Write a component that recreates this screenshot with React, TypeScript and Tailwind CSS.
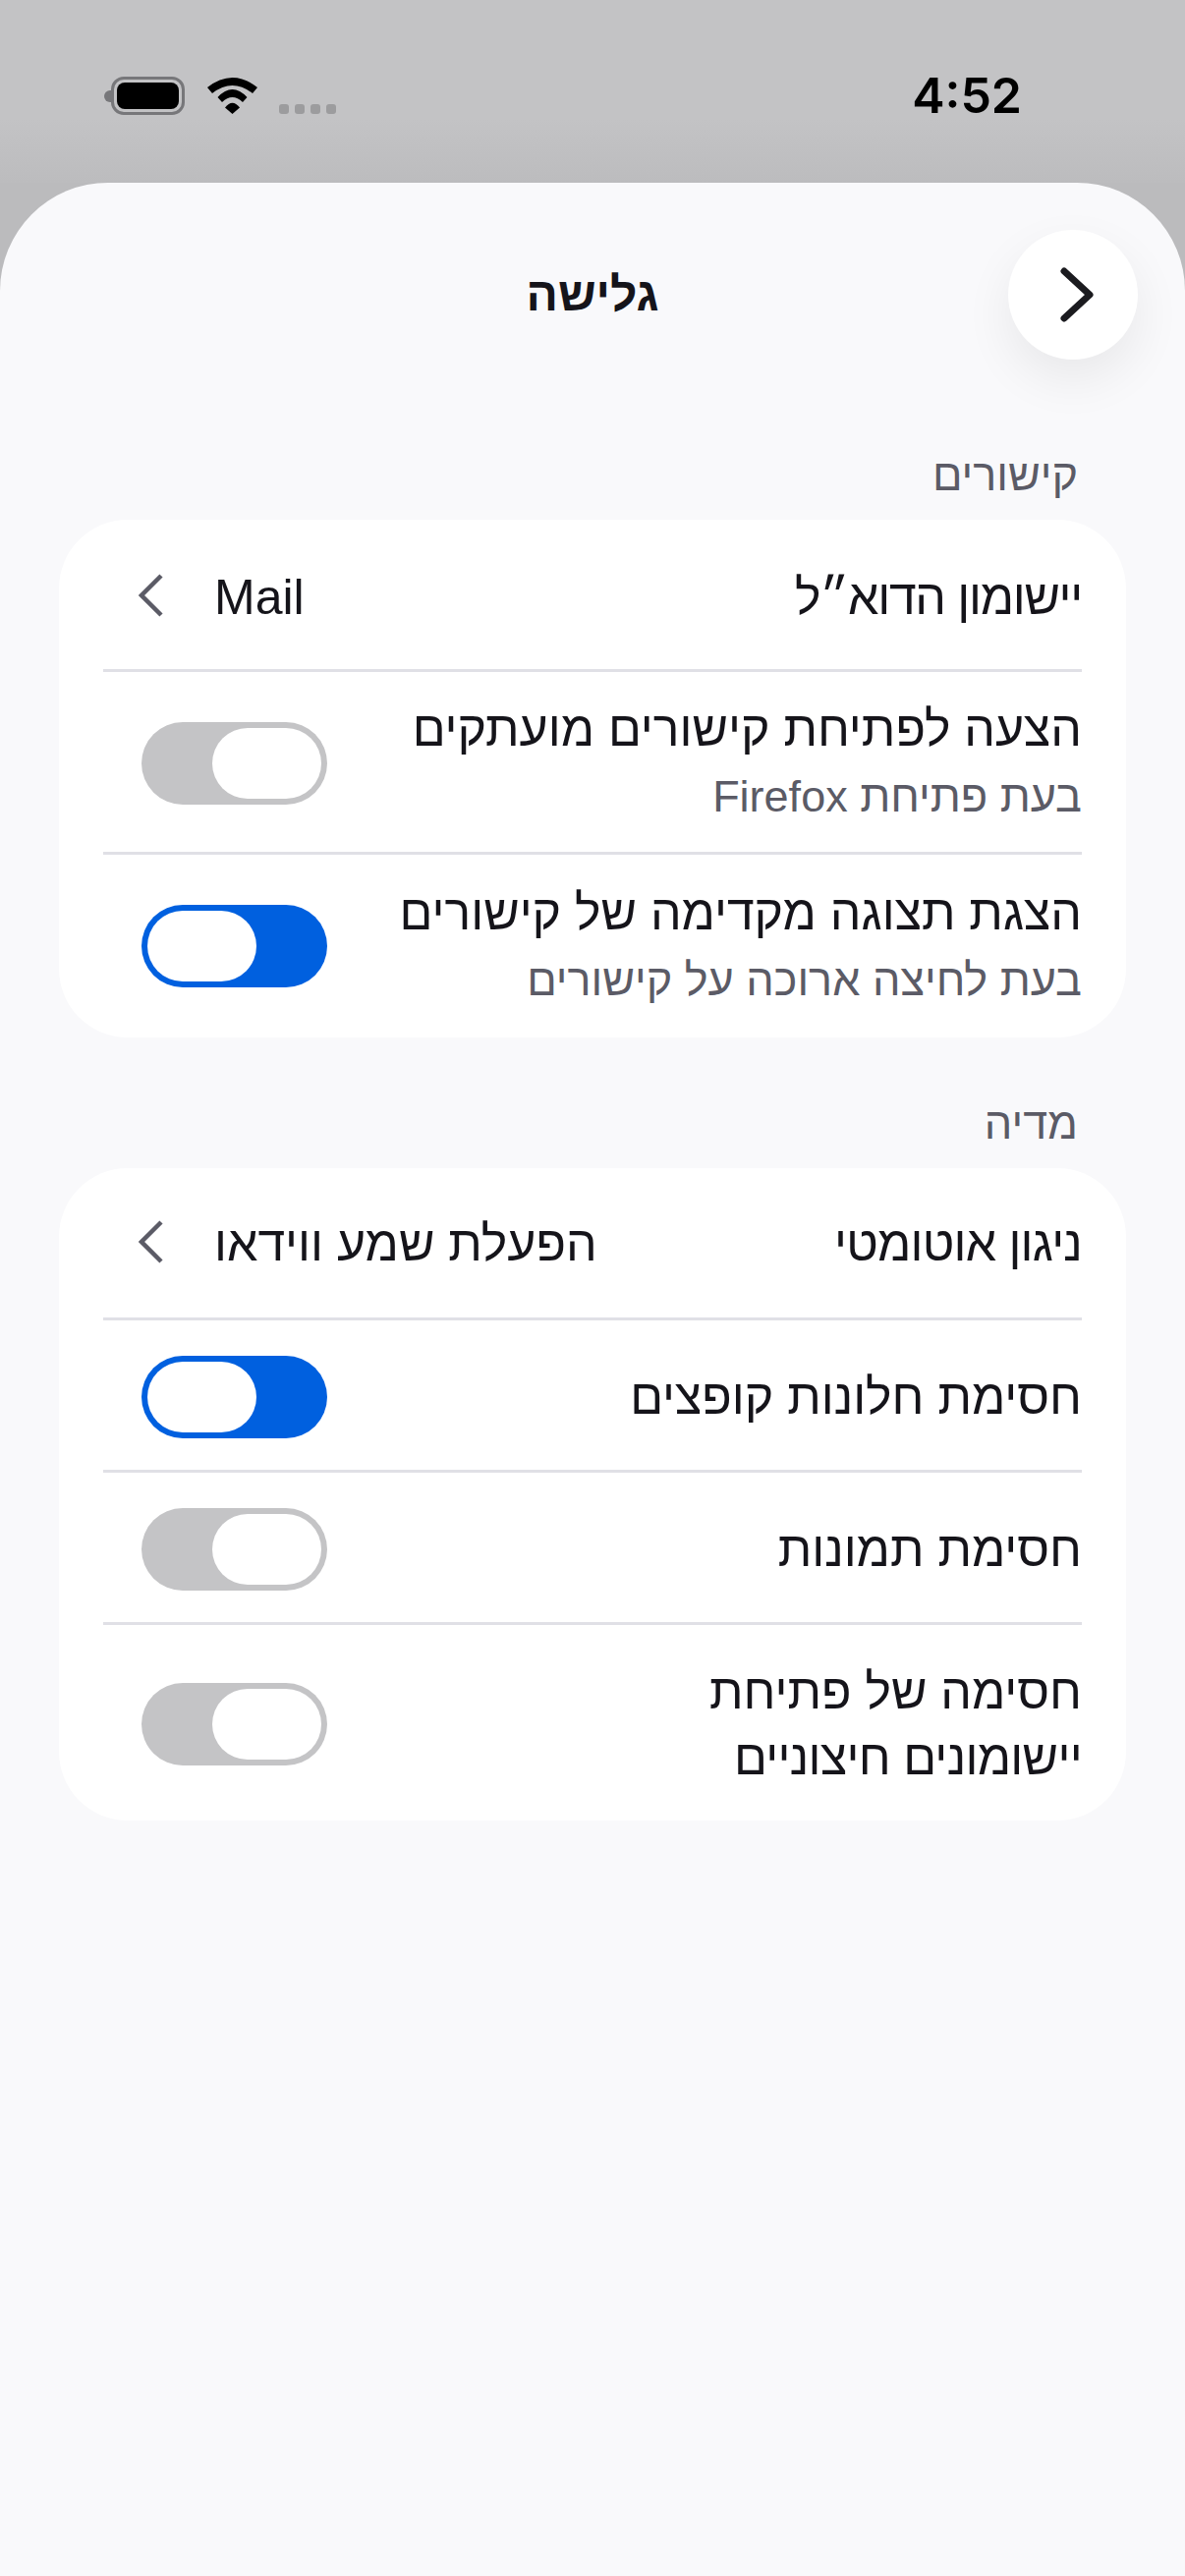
const FONT = "font-['Liberation_Sans','Inter',sans-serif]";

function Wifi() {
  return (
    <svg width="51" height="37" viewBox="0 0 51 37" fill="#000">
      <path d="M0 10Q25.5 -10 51 10L46 16Q25.5 0 5 16Z" />
      <path d="M10.5 20Q25.5 4 40.5 20L36 25Q25.5 15 15 25Z" />
      <path d="M18 30.500Q25.500 21 33 30.500L25.500 37Z" />
    </svg>
  );
}

function Battery() {
  return (
    <div className="flex items-center">
      <div className="w-[7px] h-[12px] rounded-l-full bg-[#77777a]" />
      <div className="w-[75px] h-[39px] rounded-[13px] border-[3px] border-[#77777a] p-[3px]">
        <div className="w-full h-full rounded-[8px] bg-black" />
      </div>
    </div>
  );
}

function StatusBar() {
  return (
    <div dir="ltr" className="h-[186px] pt-[78px] pl-[106px] pr-[166px] flex justify-between items-start bg-gradient-to-b from-[#c3c3c5] from-[65%] to-[#bcbcbe]">
      <div className="flex items-start">
        <Battery />
        <div className="ml-[23px] mt-px"><Wifi /></div>
        <div className="ml-[22px] mt-[28px] flex gap-[6px]">
          {[0, 1, 2, 3].map(i => (
            <div key={i} className="w-[10px] h-[10px] rounded-[3px] bg-[#9c9c9e]" />
          ))}
        </div>
      </div>
      <div className="font-['Inter',sans-serif] font-semibold text-[50px] leading-[38px] text-black">4:52</div>
    </div>
  );
}

function SmallChevron() {
  return (
    <svg width="25" height="44" viewBox="0 0 25 44" fill="none" stroke="#5b5b66" strokeWidth="4.500" className="mt-[-5px]">
      <path d="M23 2L3 22L23 42" />
    </svg>
  );
}

function Toggle({ on }: { on?: boolean }) {
  return (
    <div className={`w-[189px] h-[84px] rounded-[42px] p-[6px] flex ${on ? "bg-[#0060df] justify-start" : "bg-[#c4c4c6] justify-end"}`} dir="ltr">
      <div className="w-[111px] h-[72px] rounded-[36px] bg-white" />
    </div>
  );
}

function Row({ last, pad, children }: { last?: boolean; pad: string; children: React.ReactNode }) {
  return (
    <div className={`flex items-center justify-between ${pad} ${last ? "" : "pt-[3px] border-b-[3px] border-[#e0e0e6]"}`}>
      {children}
    </div>
  );
}

function Title({ children }: { children: React.ReactNode }) {
  return <div className="text-[50px] leading-[67px] text-[#15141a]">{children}</div>;
}

function Sub({ children }: { children: React.ReactNode }) {
  return <div className="text-[45px] leading-[60px] mt-[5px] text-[#5b5b66]">{children}</div>;
}

function Section({ label, children }: { label: string; children: React.ReactNode }) {
  return (
    <section>
      <div className="h-[56px] mb-[17px] pr-[49px] text-[45px] leading-[56px] text-[#5b5b66]">{label}</div>
      <div className="bg-white rounded-[70px] pr-[45px] pl-[45px]">{children}</div>
    </section>
  );
}

function ToggleSlot({ on }: { on?: boolean }) {
  return <div className="pl-[39px] shrink-0"><Toggle on={on} /></div>;
}

function LinkValue({ children }: { children: React.ReactNode }) {
  return (
    <div className="flex items-center gap-[52px] pl-[36px]">
      <div className="text-[50px] leading-[67px] text-[#15141a]">{children}</div>
      <SmallChevron />
    </div>
  );
}

export default function App() {
  return (
    <div className={`w-[1206px] h-[2622px] overflow-hidden bg-[#bbbbbd] flex flex-col ${FONT}`}>
      <StatusBar />
      <div dir="rtl" className="flex-1 rounded-t-[110px] bg-[#f9f9fb] pt-[48px]">
        <div className="px-[48px] grid grid-cols-[1fr_auto_1fr] items-center">
          <div className="flex justify-start">
            <button className="w-[132px] h-[132px] rounded-full bg-white shadow-[0_20px_50px_rgba(0,0,0,0.07)] flex items-center justify-center">
              <svg width="34" height="56" viewBox="0 0 34 56" fill="none" stroke="#1b1b1f" strokeWidth="7" strokeLinecap="round" strokeLinejoin="round" className="ml-[8px]">
                <path d="M4 4L30 28L4 52" />
              </svg>
            </button>
          </div>
          <div className="text-[48px] font-bold text-[#15141a]">גלישה</div>
          <div />
        </div>

        <div className="px-[60px] pt-[90px] flex flex-col gap-[60px]">
          <Section label="קישורים">
            <Row pad="h-[155px]">
              <div className="pt-[3px] tracking-[-1.3px]"><Title>יישומון הדוא״ל</Title></div>
              <div className="pt-[3px]"><LinkValue>Mail</LinkValue></div>
            </Row>
            <Row pad="h-[186px]">
              <div className="pb-[5px]">
                <Title>הצעה לפתיחת קישורים מועתקים</Title>
                <Sub>בעת פתיחת Firefox</Sub>
              </div>
              <ToggleSlot />
            </Row>
            <Row last pad="h-[186px]">
              <div className="pb-[2px]">
                <Title>הצגת תצוגה מקדימה של קישורים</Title>
                <Sub>בעת לחיצה ארוכה על קישורים</Sub>
              </div>
              <ToggleSlot on />
            </Row>
          </Section>

          <Section label="מדיה">
            <Row pad="h-[155px]">
              <div className="tracking-[-0.8px]"><Title>ניגון אוטומטי</Title></div>
              <LinkValue>הפעלת שמע ווידאו</LinkValue>
            </Row>
            <Row pad="h-[155px]">
              <div className="pt-[2px]"><Title>חסימת חלונות קופצים</Title></div>
              <ToggleSlot on />
            </Row>
            <Row pad="h-[155px]">
              <div className="pt-[2px]"><Title>חסימת תמונות</Title></div>
              <ToggleSlot />
            </Row>
            <Row last pad="h-[199px] pt-[3px]">
              <div className="pt-[2px]">
                <Title>חסימה של פתיחת<br /><span className="tracking-[-0.7px]">יישומונים חיצוניים</span></Title>
              </div>
              <ToggleSlot />
            </Row>
          </Section>
        </div>
      </div>
    </div>
  );
}
